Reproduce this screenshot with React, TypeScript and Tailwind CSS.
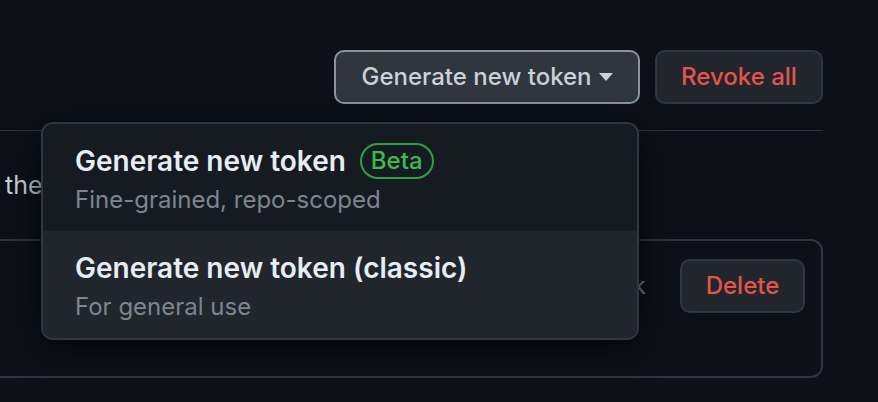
import React from 'react';

const Caret: React.FC = () => (
  <svg width="14" height="8" viewBox="0 0 14 8" className="shrink-0">
    <path d="M0 0h14L7 8z" fill="#c9d1d9" />
  </svg>
);

const MenuItem: React.FC<{ title: string; desc: string; beta?: boolean; active?: boolean }> = ({
  title,
  desc,
  beta,
  active,
}) => (
  <div className={`px-[32px] pt-[18px] pb-[15px] ${active ? 'bg-[#21262d]' : 'bg-[#161b22]'}`}>
    <div className="flex items-center gap-[14px] h-[38px]">
      <span className="text-[28px] font-semibold text-[#e6edf3] leading-none">{title}</span>
      {beta && (
        <span className="h-[36px] px-[9px] flex items-center rounded-full border-2 border-[#2ea043] text-[#3fb950] text-[24px] font-medium leading-none">
          Beta
        </span>
      )}
    </div>
    <div className="mt-[4px] text-[24px] text-[#7d8590] leading-[32px]">{desc}</div>
  </div>
);

export default function App() {
  return (
    <div
      className="relative w-[878px] h-[402px] overflow-hidden bg-[#0d1117]"
      style={{ fontFamily: 'Inter, "Noto Sans", sans-serif' }}
    >
      <div className="pt-[50px] pr-[55px]">
        {/* Header actions */}
        <div className="flex justify-end gap-[15px] pb-[26px] border-b border-[#30363d]">
          <button className="h-[54px] w-[306px] flex items-center justify-center gap-[7px] rounded-[10px] border-2 border-[#8b949e] bg-[#30363d] text-[#c9d1d9] text-[24px] font-medium">
            Generate new token
            <Caret />
          </button>
          <button className="h-[54px] w-[168px] flex items-center justify-center rounded-[10px] border-2 border-[#30363d] bg-[#21262d] text-[#e5534b] text-[24px] font-medium">
            Revoke all
          </button>
        </div>

        <p className="mt-[36px] pl-[5px] text-[25px] leading-[36px] text-[#c9d1d9] whitespace-nowrap">
          the
        </p>

        {/* Token row */}
        <div className="mt-[36px] -ml-[20px] h-[139px] rounded-[12px] border-2 border-[#30363d] flex justify-end items-start pt-[18px] pr-[16px]">
          <div className="flex items-center gap-[34px]">
            <span className="text-[24px] text-[#7d8590] whitespace-nowrap">week</span>
            <button className="h-[54px] w-[125px] flex items-center justify-center rounded-[10px] border-2 border-[#30363d] bg-[#21262d] text-[#e5534b] text-[24px] font-medium">
              Delete
            </button>
          </div>
        </div>
      </div>

      {/* Dropdown menu */}
      <div className="absolute left-[41px] top-[122px] w-[598px] rounded-[12px] border-2 border-[#30363d] overflow-hidden shadow-[0_8px_32px_rgba(1,4,9,0.85)]">
        <MenuItem title="Generate new token" desc="Fine-grained, repo-scoped" beta />
        <MenuItem title="Generate new token (classic)" desc="For general use" active />
      </div>
    </div>
  );
}
